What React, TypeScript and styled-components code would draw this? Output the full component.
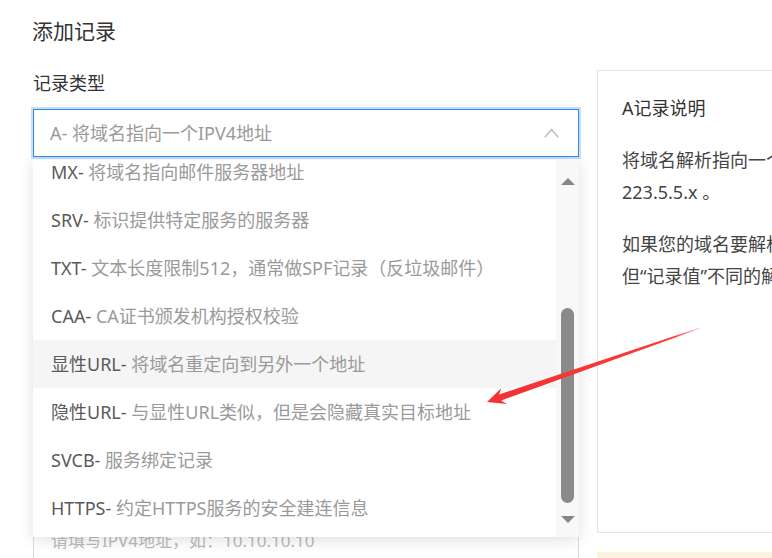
import React from "react";
import styled, { createGlobalStyle } from "styled-components";

const GlobalStyle = createGlobalStyle`
  html, body {
    margin: 0;
    padding: 0;
    background: #ffffff;
    overflow: hidden;
  }
  body {
    font-family: "Noto Sans", "Noto Sans CJK SC", sans-serif;
    color: #333;
  }
  * { box-sizing: border-box; }
`;

const Page = styled.div`
  position: relative;
  width: 1100px;
  height: 558px;
  padding: 18px 0 0 32px;
  overflow: hidden;
`;

const Title = styled.h2`
  margin: 0;
  font-size: 21px;
  line-height: 26px;
  font-weight: 400;
  color: #333;
`;

const Main = styled.div`
  display: flex;
  align-items: flex-start;
  gap: 17px;
  margin-top: 26px;
`;

const LeftCol = styled.div`
  position: relative;
  width: 548px;
  padding-left: 1px;
  display: flex;
  flex-direction: column;
`;

const FormItem = styled.div<{ $gap?: number }>`
  display: flex;
  flex-direction: column;
  margin-top: ${(p) => p.$gap ?? 0}px;
`;

const Label = styled.label`
  font-size: 18px;
  line-height: 26px;
  color: #333;
  margin-bottom: 13px;
`;

const SelectBox = styled.div`
  width: 546px;
  height: 48px;
  border: 1px solid #2b8de6;
  box-shadow: 0 0 0 2px #c9dff6;
  display: flex;
  align-items: center;
  justify-content: space-between;
  padding: 0 19px 0 16px;
  background: #fff;
`;

const SelectValue = styled.span`
  font-size: 18px;
  line-height: 24px;
  color: #9a9a9a;
`;

const Input = styled.div`
  width: 546px;
  height: 48px;
  border: 1px solid #dcdcdc;
  display: flex;
  align-items: center;
  padding-left: 17px;
  font-size: 17px;
  color: #bbbbbb;
  white-space: nowrap;
`;

const Dropdown = styled.div`
  position: absolute;
  top: 90px;
  left: 1px;
  width: 546px;
  height: 377px;
  background: #fff;
  box-shadow: 0 3px 14px rgba(0, 0, 0, 0.13);
  display: flex;
  overflow: hidden;
  z-index: 5;
`;

const List = styled.ul`
  flex: 1;
  margin: -12px 0 0 0;
  padding: 0;
  list-style: none;
`;

const Item = styled.li<{ $active?: boolean }>`
  height: 48px;
  display: flex;
  align-items: center;
  padding-left: 18px;
  font-size: 18px;
  line-height: 24px;
  white-space: nowrap;
  background: ${(p) => (p.$active ? "#f5f5f5" : "#fff")};
`;

const Code = styled.span`
  color: #5a5a5a;
`;

const Desc = styled.span`
  color: #9a9a9a;
`;

const ScrollTrack = styled.div`
  width: 23px;
  flex: 0 0 23px;
  background: #f8f8f8;
  display: flex;
  flex-direction: column;
  align-items: center;
`;

const ArrowUp = styled.div`
  margin-top: 18px;
  width: 0;
  height: 0;
  border-left: 7px solid transparent;
  border-right: 7px solid transparent;
  border-bottom: 7px solid #888;
`;

const ArrowDown = styled.div`
  margin-top: 13px;
  width: 0;
  height: 0;
  border-left: 7px solid transparent;
  border-right: 7px solid transparent;
  border-top: 7px solid #888;
`;

const Thumb = styled.div`
  margin-top: 123px;
  width: 13px;
  height: 195px;
  border-radius: 7px;
  background: #8a8a8a;
`;

const RightCol = styled.div`
  display: flex;
  flex-direction: column;
  gap: 19px;
`;

const InfoPanel = styled.div`
  width: 420px;
  height: 463px;
  border: 1px solid #e4e4e4;
  padding: 21px 0 0 24px;
  white-space: nowrap;
`;

const InfoTitle = styled.div`
  font-size: 18px;
  line-height: 32px;
  color: #333;
`;

const InfoPara = styled.p`
  margin: 20px 0 0 0;
  font-size: 18px;
  line-height: 32px;
  color: #444;
`;

const Notice = styled.div`
  width: 420px;
  height: 60px;
  background: #fdf3dc;
`;

const Overlay = styled.svg`
  position: absolute;
  top: 0;
  left: 0;
  pointer-events: none;
  z-index: 10;
`;

const Chevron = () => (
  <svg width="15" height="10" viewBox="0 0 15 10">
    <polyline
      points="0.8,9.2 7.5,1.6 14.2,9.2"
      fill="none"
      stroke="#b8b8b8"
      strokeWidth="1.4"
    />
  </svg>
);

const options: { code: string; desc: string }[] = [
  { code: "MX", desc: "将域名指向邮件服务器地址" },
  { code: "SRV", desc: "标识提供特定服务的服务器" },
  { code: "TXT", desc: "文本长度限制512，通常做SPF记录（反垃圾邮件）" },
  { code: "CAA", desc: "CA证书颁发机构授权校验" },
  { code: "显性URL", desc: "将域名重定向到另外一个地址" },
  { code: "隐性URL", desc: "与显性URL类似，但是会隐藏真实目标地址" },
  { code: "SVCB", desc: "服务绑定记录" },
  { code: "HTTPS", desc: "约定HTTPS服务的安全建连信息" },
];

export default function App() {
  return (
    <>
      <GlobalStyle />
      <Page>
        <Title>添加记录</Title>
        <Main>
          <LeftCol>
            <FormItem>
              <Label>记录类型</Label>
              <SelectBox>
                <SelectValue>A- 将域名指向一个IPV4地址</SelectValue>
                <Chevron />
              </SelectBox>
            </FormItem>
            <FormItem $gap={49}>
              <Label>主机记录</Label>
              <Input>请填写主机记录</Input>
            </FormItem>
            <FormItem $gap={49}>
              <Label>解析请求来源</Label>
              <Input>默认</Input>
            </FormItem>
            <FormItem $gap={47}>
              <Label>记录值</Label>
              <Input>请填写IPV4地址，如：10.10.10.10</Input>
            </FormItem>

            <Dropdown>
              <List>
                {options.map((o) => (
                  <Item key={o.code} $active={o.code === "显性URL"}>
                    <Code>{o.code}-</Code>
                    <Desc>&nbsp;{o.desc}</Desc>
                  </Item>
                ))}
              </List>
              <ScrollTrack>
                <ArrowUp />
                <Thumb />
                <ArrowDown />
              </ScrollTrack>
            </Dropdown>
          </LeftCol>

          <RightCol>
            <InfoPanel>
              <InfoTitle>A记录说明</InfoTitle>
              <InfoPara>
                将域名解析指向一个IPV4地址，例如：
                <br />
                223.5.5.x 。
              </InfoPara>
              <InfoPara>
                如果您的域名要解析到多个IPV4地址，
                <br />
                但“记录值”不同的解析请添加多条记录。
              </InfoPara>
            </InfoPanel>
            <Notice />
          </RightCol>
        </Main>

        <Overlay width="772" height="558" viewBox="0 0 772 558">
          <defs>
            <linearGradient id="arrowFade" x1="700" y1="328" x2="487" y2="402" gradientUnits="userSpaceOnUse">
              <stop offset="0" stopColor="#ff6b6b" stopOpacity="0.3" />
              <stop offset="0.12" stopColor="#ff3838" stopOpacity="1" />
              <stop offset="1" stopColor="#f23333" stopOpacity="1" />
            </linearGradient>
          </defs>
          <polygon
            points="700,327.4 499.2,394.4 501.2,388.2 487,402 506.8,403.9 501.2,400.4 700.3,328.6"
            fill="url(#arrowFade)"
          />
        </Overlay>
      </Page>
    </>
  );
}
